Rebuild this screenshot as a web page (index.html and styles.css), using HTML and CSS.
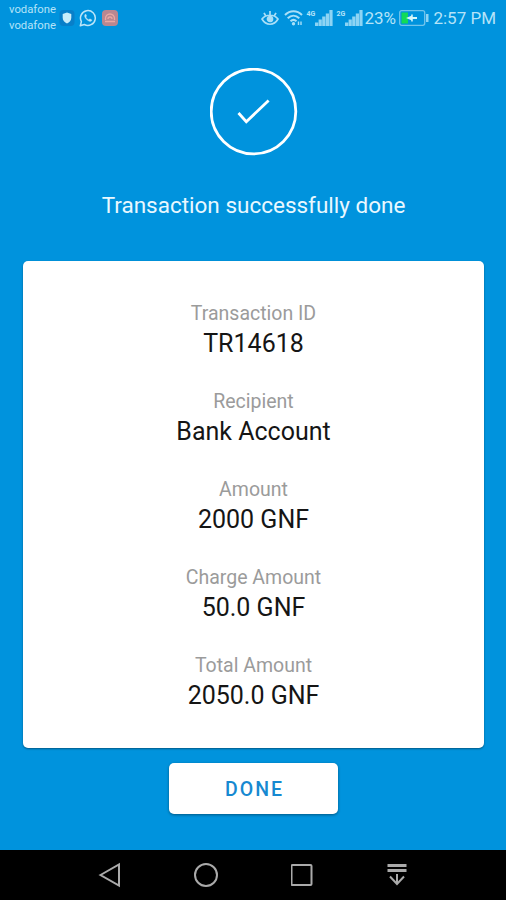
FILE: index.html
```html
<!DOCTYPE html>
<html lang="en">
<head>
  <meta charset="UTF-8">
  <meta name="viewport" content="width=device-width, initial-scale=1.0">
  <title>Transaction</title>
  <link rel="stylesheet" href="styles.css">
</head>
<body>
  <!-- Status Bar -->
  <header class="status-bar">
    <div class="carriers">
      <div>vodafone</div>
      <div>vodafone</div>
    </div>
    <svg class="icon-shield" width="16" height="18" viewBox="0 0 16 18">
      <rect x="0.5" y="1" width="15" height="16" rx="4" fill="#087fc9"/>
      <path d="M8 3.5l4.3 1.6v3.7c0 2.8-1.900 4.700-4.300 5.800-2.400-1.100-4.300-3-4.300-5.800V5.100z" fill="#c9edfb"/>
    </svg>
    <svg class="icon-chat" width="18" height="18" viewBox="0 0 18 18" fill="none" stroke="#bce5f8">
      <path d="M1.300 16.700l1.100-4.100a7.400 7.400 0 1 1 2.900 2.900z" stroke-width="1.500" stroke-linejoin="round"/>
      <path d="M6.200 5.200c-1.500 1.500-.3 3.700 1.400 5.400 1.700 1.700 3.800 2.600 5.200 1.100l-.1-1-1.900-.9-1 1c-1.200-.5-2.400-1.600-2.900-2.800l.8-1-.8-1.800z" fill="#bce5f8" stroke-width="0.300"/>
    </svg>
    <svg class="icon-app" width="16" height="16" viewBox="0 0 16 16">
      <rect width="16" height="16" rx="4" fill="#b98791"/>
      <path d="M3.500 10V8.500a4.500 4.500 0 0 1 9 0V10M3 11.500h10M6 9a2 2 0 0 1 4 0" fill="none" stroke="#e9a9a5" stroke-width="1.300"/>
    </svg>
    <div class="status-right">
      <svg class="icon-eye" width="18" height="16" viewBox="0 0 18 16" fill="none" stroke="#a9dff7" stroke-width="1.700">
        <path d="M1 9c4-5 12-5 16 0-4 7-12 7-16 0zM9 5V1M4.500 5.500L3 2.800M13.500 5.500L15 2.800"/>
        <circle cx="9" cy="9" r="2.500" fill="#a9dff7"/>
      </svg>
      <svg class="icon-wifi" width="19" height="16" viewBox="0 0 19 16" fill="none" stroke="#a9dff7" stroke-width="2">
        <path d="M1 5c5-5 12-5 17 0M3.700 8.300c3.500-3.500 8-3.500 11.600 0M6.500 11.300c2-1.900 4-1.900 6 0"/>
        <circle cx="9.500" cy="13.800" r="1.700" fill="#a9dff7" stroke="none"/>
        <path d="M14.500 11.500v3.500M17 11.500v3.500" stroke-width="1.400"/>
      </svg>
      <div class="signal">
        <span>4G</span>
        <svg width="18" height="16" viewBox="0 0 18 16" fill="#8dd4f4">
          <path d="M0 12.500h3.200V16H0zM3.600 9.500h3.200V16H3.600zM7.200 6.500h3.200V16H7.200zM10.800 3.500H14V16h-3.200zM14.400 0h3.200v16h-3.200z"/>
        </svg>
      </div>
      <div class="signal">
        <span>2G</span>
        <svg width="18" height="16" viewBox="0 0 18 16" fill="#8dd4f4">
          <path d="M0 12.500h3.200V16H0zM3.600 9.500h3.200V16H3.600zM7.200 6.500h3.200V16H7.200zM10.800 3.500H14V16h-3.200zM14.400 0h3.200v16h-3.200z"/>
        </svg>
      </div>
      <span class="battery-level">23%</span>
      <svg class="icon-battery" width="30" height="16" viewBox="0 0 30 16">
        <rect x="0.700" y="0.700" width="25" height="14.600" rx="2" fill="none" stroke="#71c4ec" stroke-width="1.300"/>
        <rect x="2.500" y="2.500" width="6.500" height="11" fill="#12db57"/>
        <path d="M7 8l6-2.500V7h5v2h-5v1.500z" fill="#d7f7fa"/>
        <path d="M13 4.500v7" stroke="#d7f7fa" stroke-width="1.500"/>
        <rect x="27" y="4" width="2.500" height="8" fill="#8dd4f4"/>
      </svg>
      <span class="clock">2:57 PM</span>
    </div>
  </header>

  <!-- Result -->
  <main class="content">
    <svg class="check" width="88" height="88" viewBox="0 0 88 88" fill="none" stroke="#fff">
      <circle cx="43.500" cy="43.500" r="42.300" stroke-width="2.800"/>
      <path d="M28.500 45l7.800 8.700 22.300-21.200" stroke-width="2.800"/>
    </svg>
    <h1>Transaction successfully done</h1>

    <div class="card">
      <div class="field">
        <div class="label">Transaction ID</div>
        <div class="value">TR14618</div>
      </div>
      <div class="field">
        <div class="label">Recipient</div>
        <div class="value">Bank Account</div>
      </div>
      <div class="field">
        <div class="label">Amount</div>
        <div class="value">2000 GNF</div>
      </div>
      <div class="field">
        <div class="label">Charge Amount</div>
        <div class="value">50.0 GNF</div>
      </div>
      <div class="field">
        <div class="label">Total Amount</div>
        <div class="value">2050.0 GNF</div>
      </div>
    </div>

    <button class="done">DONE</button>
  </main>

  <!-- Navigation Bar -->
  <nav class="nav-bar">
    <svg width="24" height="26" viewBox="0 0 24 26"><path d="M2.500 13L21 2.500v21z"/></svg>
    <svg width="26" height="26" viewBox="0 0 26 26"><circle cx="13" cy="13" r="11"/></svg>
    <svg width="24" height="26" viewBox="0 0 24 26"><rect x="0.500" y="3" width="20" height="20" rx="1"/></svg>
    <svg width="22" height="26" viewBox="0 0 22 26"><path d="M1.500 3.500h19M1.500 8.500h19" stroke-width="2.800"/><path d="M11 12v10M4 14.500l7 7.500 7-7.500"/></svg>
  </nav>
</body>
</html>
```
FILE: styles.css
```css
* {
  box-sizing: border-box;
}
body {
  margin: 0;
  height: 900px;
  display: flex;
  flex-direction: column;
  overflow: hidden;
  background-color: #0093dd;
  font-family: Roboto, Arial, sans-serif;
}
.status-bar {
  display: flex;
  align-items: center;
  height: 36px;
  padding: 0 10px 0 9px;
  color: #b5e3f8;
}
.carriers {
  width: 48px;
  font-size: 11.3px;
  line-height: 16px;
  white-space: nowrap;
}
.icon-shield {
  margin-left: 2px;
}
.icon-chat {
  margin-left: 4px;
}
.icon-app {
  margin-left: 5px;
}
.status-right {
  display: flex;
  align-items: center;
  margin-left: auto;
  white-space: nowrap;
}
.icon-wifi {
  margin-left: 5px;
}
.signal {
  display: flex;
  align-items: flex-start;
  margin-left: 3px;
}
.signal span {
  width: 9px;
  font-size: 7px;
  font-weight: bold;
  line-height: 8px;
}
.battery-level {
  width: 32px;
  margin-left: 1px;
  font-size: 17px;
}
.icon-battery {
  margin-left: 3px;
}
.clock {
  margin-left: 4px;
  font-size: 17px;
}
.content {
  flex: 1;
  display: flex;
  flex-direction: column;
  align-items: center;
  padding: 32px 22px 0 23px;
}
.check {
  flex-shrink: 0;
}
h1 {
  margin: 34px 0 41px;
  color: #e9f8ff;
  font-size: 22.5px;
  font-weight: normal;
  line-height: 30px;
}
.card {
  width: 100%;
  height: 487px;
  padding-top: 39px;
  border-radius: 5px;
  background-color: #fff;
  box-shadow: 0 1px 2px rgba(0, 0, 0, 0.4);
  text-align: center;
}
.field {
  height: 88px;
}
.label {
  color: #9b9b9b;
  font-size: 19.5px;
  line-height: 28px;
}
.value {
  color: #151515;
  font-size: 25px;
  line-height: 32px;
}
.done {
  width: 169px;
  height: 51px;
  margin-top: 15px;
  padding: 2px 0 0 2px;
  border: none;
  border-radius: 5px;
  background-color: #fff;
  box-shadow: 0 1px 3px rgba(0, 0, 0, 0.4);
  color: #1689d1;
  font-family: inherit;
  font-size: 19.5px;
  font-weight: 500;
  letter-spacing: 2px;
}
.nav-bar {
  display: flex;
  justify-content: space-between;
  align-items: center;
  height: 50px;
  padding: 0 98px;
  background-color: #000;
}
.nav-bar svg {
  fill: none;
  stroke: #aaa;
  stroke-width: 2;
}
```
